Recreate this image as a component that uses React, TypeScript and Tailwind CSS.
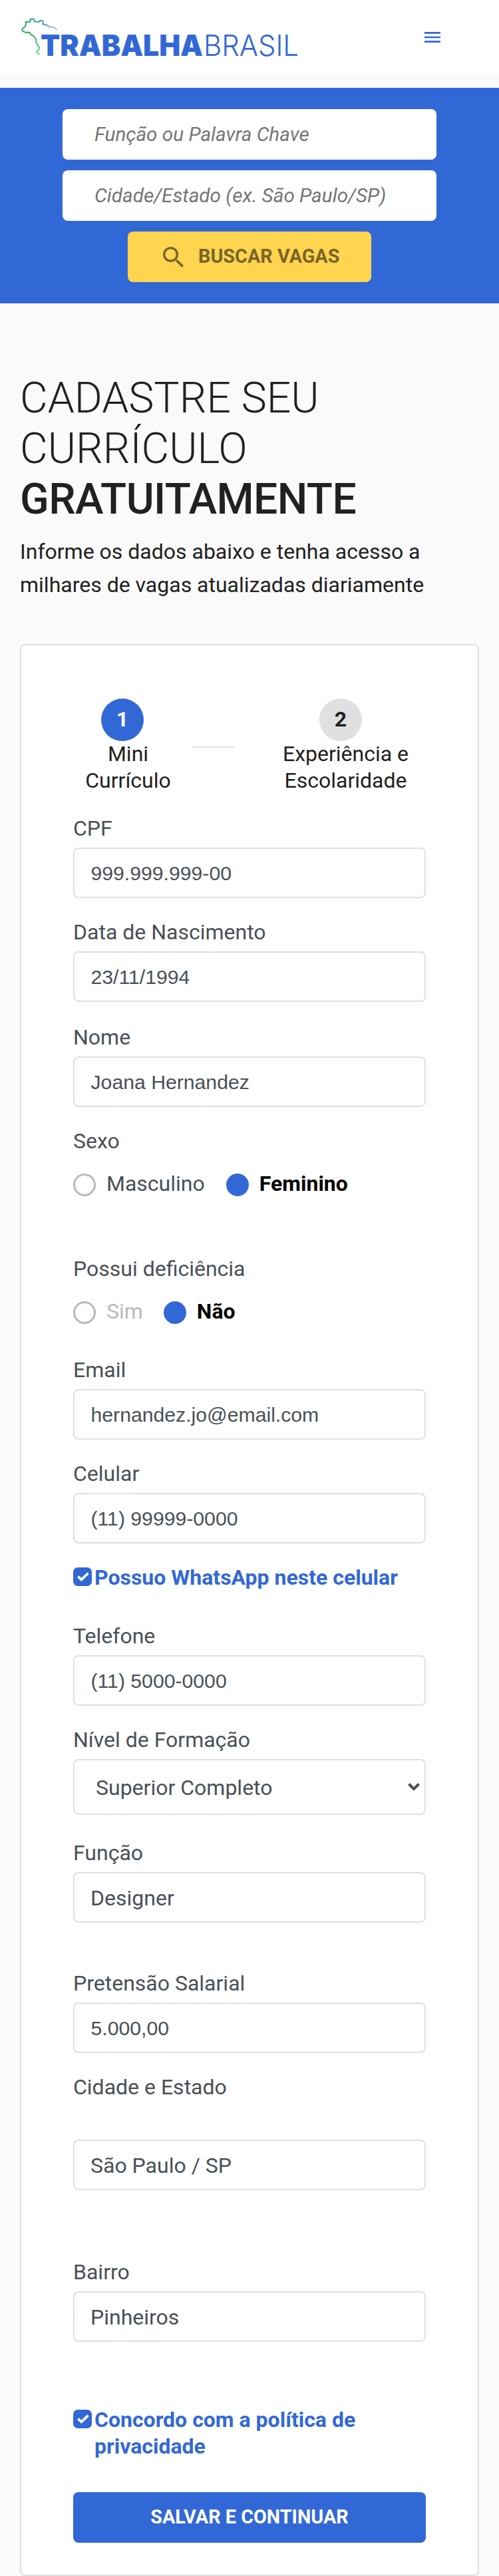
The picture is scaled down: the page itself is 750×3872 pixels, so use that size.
import type { ReactNode } from "react";

function Label({ children }: { children: ReactNode }) {
  return <label className="block h-[38px] text-[32px] leading-[36px] text-[#495057]">{children}</label>;
}

function Field({ label, value, arial, className = "" }: { label: string; value: string; arial?: boolean; className?: string }) {
  return (
    <div className={className}>
      <Label>{label}</Label>
      <div className="mt-[9px] flex h-[76px] items-center rounded-[8px] border-2 border-[#e0e0e0] bg-white text-[#495057]">
        {arial ? (
          <span className="pt-px pl-[24.5px] font-['Liberation_Sans',sans-serif] text-[30.2px] leading-[40px]">{value}</span>
        ) : (
          <span className="pt-[2px] pl-[24px] text-[32px] leading-[40px]">{value}</span>
        )}
      </div>
    </div>
  );
}

function Radio({ checked, children, className = "" }: { checked?: boolean; children: ReactNode; className?: string }) {
  return (
    <div className={`flex h-[34px] items-center text-[32px] leading-[38px] ${className}`}>
      <span className={checked ? "size-[34px] rounded-full bg-[#3268d6]" : "size-[34px] rounded-full border-[3px] border-[#b9b9b9]"} />
      <span className={checked ? "mb-[4px] ml-[16px] font-bold text-black" : "mb-[4px] ml-[16px]"}>{children}</span>
    </div>
  );
}

function Check({ children }: { children: ReactNode }) {
  return (
    <div className="flex text-[32px] font-bold leading-[40px] text-[#3268d6]">
      <svg className="mt-[5px] mr-[4px] shrink-0" width="28" height="28" viewBox="0 0 28 28">
        <rect width="28" height="28" rx="7" fill="#3268d6" />
        <path d="M7.300 13.600l5 4.800 10.200-9.800" fill="none" stroke="#fff" strokeWidth="3.600" />
      </svg>
      <span>{children}</span>
    </div>
  );
}

function Logo() {
  return (
    <svg width="430" height="90" viewBox="0 0 430 90" className="block">
      <defs>
        <linearGradient id="brazil" gradientUnits="userSpaceOnUse" x1="2" y1="30" x2="55" y2="22">
          <stop offset="0" stopColor="#2fae62" />
          <stop offset="0.300" stopColor="#3fb07c" />
          <stop offset="0.600" stopColor="#4f9fba" />
          <stop offset="1" stopColor="#bccdf4" />
        </linearGradient>
        <linearGradient id="coast" gradientUnits="userSpaceOnUse" x1="0" y1="26" x2="0" y2="62">
          <stop offset="0" stopColor="#2fb066" />
          <stop offset="1" stopColor="#7fd6a3" />
        </linearGradient>
      </defs>
      <g fill="none" strokeWidth="2.200" strokeLinejoin="round">
        <path
          d="M54.300 25.700L51.700 21.700 42.300 20 39.700 17.700 34 16.700 33 11 29 11 27.700 13 21.300 12.300 19.700 8.700 15 8.700 14 13 8 12.700 7.300 19.300 1.700 24.300"
          stroke="url(#brazil)"
        />
        <path
          d="M1.700 24.300L4 27.300 8.300 29 13 28.700 15.700 32.300 19.700 34.300 23 39 23.700 45 28 51 27.700 54.300 24 57 25.700 60.300 28.700 61.700"
          stroke="url(#coast)"
        />
      </g>
      <text x="30" y="63.500" textLength="244" lengthAdjust="spacingAndGlyphs" fontFamily="Inter" fontWeight="900" fontSize="43.500" fill="#3268d6">TRABALHA</text>
      <text x="275" y="63.500" textLength="143" lengthAdjust="spacingAndGlyphs" fontFamily="Inter" fontWeight="300" fontSize="43.500" fill="#3268d6">BRASIL</text>
    </svg>
  );
}

export default function App() {
  return (
    <div className="h-[3872px] w-[750px] overflow-hidden bg-[#fafafa] font-['Roboto',sans-serif] text-[#212121]">
      <header className="flex h-[112px] items-start justify-between bg-white pt-[20px] pr-[88px] pl-[31px]">
        <Logo />
        <svg width="24" height="16" viewBox="0 0 24 16" className="mt-[28px]">
          <path d="M0 0h24v2.700H0zM0 6.700h24v2.600H0zM0 13.300h24V16H0z" fill="#3268d6" />
        </svg>
      </header>

      <section className="mt-[20px] flex h-[324px] flex-col items-center bg-[#3268d6] pt-[32px]">
        <div className="flex h-[76px] w-[562px] items-center rounded-[8px] bg-white pl-[48px] text-[29.7px] text-[#757575] italic">Função ou Palavra Chave</div>
        <div className="mt-[16px] flex h-[76px] w-[562px] items-center rounded-[8px] bg-white pl-[48px] text-[29.7px] text-[#757575] italic">Cidade/Estado (ex. São Paulo/SP)</div>
        <button className="mt-[16px] flex h-[76px] w-[366px] items-center rounded-[8px] bg-[#ffd54f] pl-[53px] text-[28.8px] font-bold text-[#7a6528]">
          <svg width="31" height="31" viewBox="3 3 17.490 17.490" fill="currentColor">
            <path d="M15.500 14h-.79l-.28-.27A6.471 6.471 0 0 0 16 9.500 6.500 6.500 0 1 0 9.500 16c1.610 0 3.090-.59 4.230-1.570l.27.28v.79l5 4.990L20.490 19l-4.990-5zm-6 0C7.010 14 5 11.990 5 9.500S7.010 5 9.500 5 14 7.010 14 9.500 11.990 14 9.500 14z" />
          </svg>
          <span className="ml-[22px]">BUSCAR VAGAS</span>
        </button>
      </section>

      <section className="px-[30px] pt-[104px]">
        <h1 className="text-[64.2px] leading-[76px] font-light">
          CADASTRE SEU
          <br />
          CURRÍCULO
          <br />
          <span className="font-medium tracking-[-0.55px]">GRATUITAMENTE</span>
        </h1>
        <p className="mt-[16px] text-[32px] leading-[50px]">
          Informe os dados abaixo e tenha acesso a
          <br />
          milhares de vagas atualizadas diariamente
        </p>
      </section>

      <main className="mt-[64px] ml-[30px] h-[2904px] w-[690px] rounded-[8px] border-2 border-[#e0e0e0] bg-white px-[78px] pt-[80px]">
        <div className="flex h-[150px]">
          <div className="w-[165px]">
            <div className="ml-[42px] flex size-[64px] items-center justify-center rounded-full bg-[#3268d6] pb-[2px] text-[32px] font-bold text-white">1</div>
            <div className="-mt-px text-center text-[32px] leading-[40px]">Mini<br />Currículo</div>
          </div>
          <div className="mt-[72px] ml-[13px] h-[2px] w-[64px] bg-[#e0e0e0]" />
          <div className="ml-[64px] w-[207px]">
            <div className="ml-[64px] flex size-[64px] items-center justify-center rounded-full bg-[#e0e0e0] pb-[2px] text-[32px] font-bold">2</div>
            <div className="-mt-px text-center text-[32px] leading-[40px]">Experiência e<br />Escolaridade</div>
          </div>
        </div>

        <Field className="mt-[27px]" label="CPF" value="999.999.999-00" arial />
        <Field className="mt-[33px]" label="Data de Nascimento" value="23/11/1994" arial />
        <Field className="mt-[35px]" label="Nome" value="Joana Hernandez" arial />

        <div className="mt-[33px] text-[#495057]">
          <Label>Sexo</Label>
          <div className="mt-[29px] flex">
            <Radio>Masculino</Radio>
            <Radio checked className="ml-[32px]">Feminino</Radio>
          </div>
        </div>
        <div className="mt-[91px] text-[#b9b9b9]">
          <Label>Possui deficiência</Label>
          <div className="mt-[29px] flex">
            <Radio>Sim</Radio>
            <Radio checked className="ml-[31px]">Não</Radio>
          </div>
        </div>

        <Field className="mt-[51px]" label="Email" value="hernandez.jo@email.com" arial />
        <Field className="mt-[33px]" label="Celular" value="(11) 99999-0000" arial />
        <div className="mt-[31px] h-[40px]">
          <Check>Possuo WhatsApp neste celular</Check>
        </div>
        <Field className="mt-[50px]" label="Telefone" value="(11) 5000-0000" arial />

        <div className="mt-[33px]">
          <Label>Nível de Formação</Label>
          <div className="mt-[9px] flex h-[84px] items-center justify-between rounded-[8px] border-2 border-[#e0e0e0] pr-[7px] pl-[32px] text-[32px] text-[#495057]">
            <span className="pt-[2px]">Superior Completo</span>
            <svg width="18" height="12" viewBox="0 0 18 12">
              <path d="M1.500 1.500L9 9l7.500-7.500" fill="none" stroke="#495057" strokeWidth="4" />
            </svg>
          </div>
        </div>

        <Field className="mt-[39px]" label="Função" value="Designer" />
        <Field className="mt-[73px]" label="Pretensão Salarial" value="5.000,00" arial />
        <div className="mt-[33px]">
          <Label>Cidade e Estado</Label>
        </div>
        <div className="mt-[59px] flex h-[76px] items-center rounded-[8px] border-2 border-[#e0e0e0] pl-[24px] text-[32px] text-[#495057]">
          <span className="pt-[2px]">São Paulo / SP</span>
        </div>
        <Field className="mt-[105px]" label="Bairro" value="Pinheiros" />

        <div className="mt-[97px]">
          <Check>Concordo com a política de<br />privacidade</Check>
        </div>
        <button className="mt-[49px] flex h-[76px] w-full items-center justify-center rounded-[8px] bg-[#3268d6] text-[28.8px] font-bold text-white">SALVAR E CONTINUAR</button>
      </main>
    </div>
  );
}
